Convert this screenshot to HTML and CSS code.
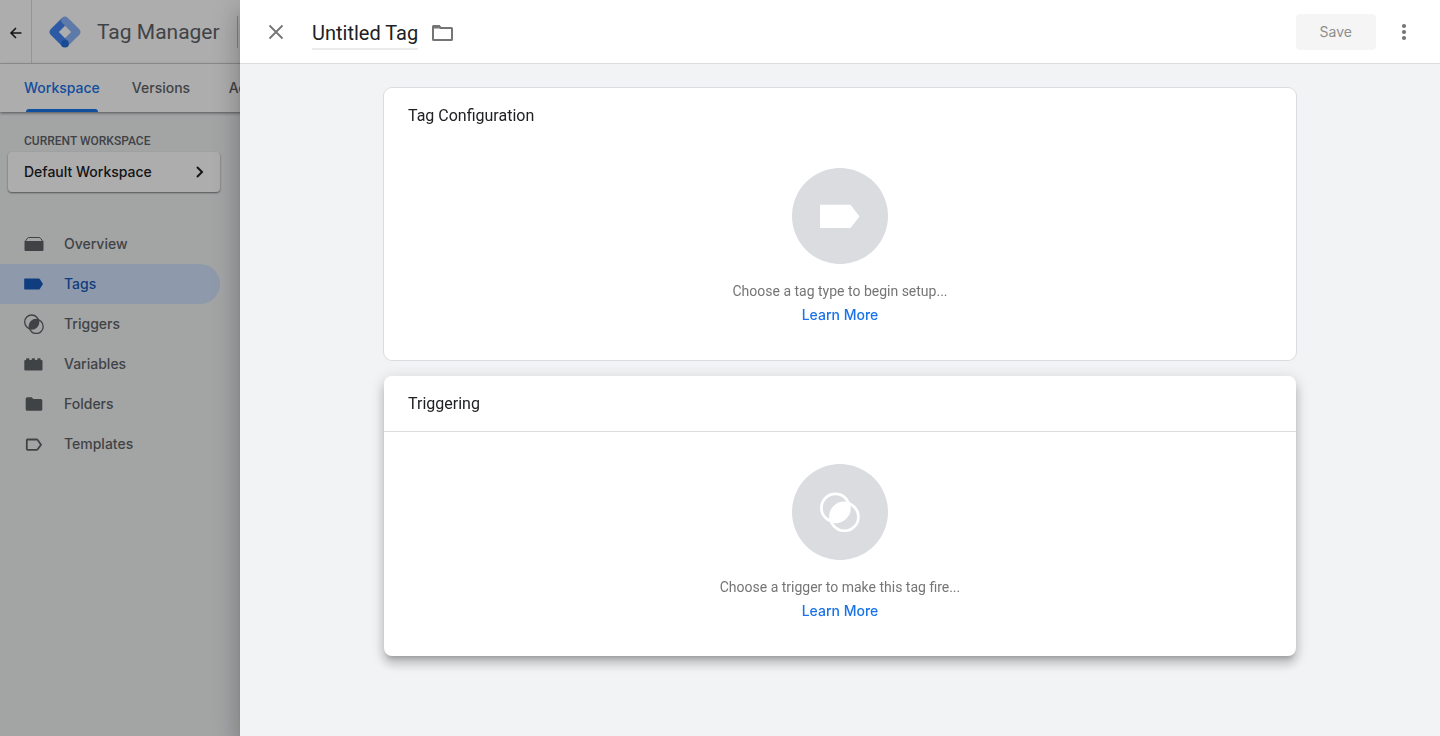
FILE: index.html
```html
<!DOCTYPE html>
<html lang="en">
<head>
	<meta charset="UTF-8">
	<title>Tag Manager</title>
	<meta name="viewport" content="width=device-width, initial-scale=1.0">
	<link rel="stylesheet" href="styles.css">
</head>
<body>
	<svg class="sprite" aria-hidden="true">
		<symbol id="i-trigger" viewBox="0 0 40 40">
			<g fill="none" stroke="currentColor" stroke-width="2.7">
				<circle cx="15.4" cy="15.9" r="14"/>
				<circle cx="24.4" cy="24.9" r="14"/>
			</g>
			<path fill="currentColor" d="M28.7 11.6A14 14 0 0 1 11.1 29.2A14 14 0 0 1 28.7 11.6Z"/>
		</symbol>
	</svg>

	<div class="app">
		<header class="topbar">
			<button class="back" type="button" aria-label="Back">
				<svg width="16" height="16" viewBox="0 0 16 16"><path d="M13.5 9H3M8 4L3 9l5 5" fill="none" stroke="currentColor" stroke-width="1.6"/></svg>
			</button>
			<a class="brand" href="#">
				<svg width="32" height="32" viewBox="-40 -40 2550 2550">
					<path fill="#8ab4f8" d="M1449.8 2376L1021 1946.7l921.1-930.5 436.7 436.6z"/>
					<path fill="#4285f4" d="M1452.9 527.1L1016.3 90.4 90.5 1016.2c-120.6 120.5-120.7 315.8-.2 436.4l.2.2 925.8 925.8 428.3-430.3L745 1235.1z"/>
					<path fill="#8ab4f8" d="M2378.7 1016.2L1452.9 90.4c-120.6-120.6-316.1-120.6-436.7 0-120.6 120.6-120.6 316.1 0 436.6l926.3 925.8c120.6 120.6 316.1 120.6 436.6 0 120.6-120.6 120.6-316.1 0-436.6z"/>
					<circle fill="#246fdb" cx="1231" cy="2164" r="306"/>
				</svg>
				<span>Tag Manager</span>
			</a>
			<span class="divider"></span>
		</header>
		<nav class="tabs">
			<a class="tab active" href="#">Workspace</a>
			<a class="tab" href="#">Versions</a>
			<a class="tab" href="#">Admin</a>
		</nav>
		<aside class="sidebar">
			<p class="label">CURRENT WORKSPACE</p>
			<button class="workspace" type="button">
				<span>Default Workspace</span>
				<svg width="16" height="16" viewBox="0 0 16 16"><path d="M5 3l5 5-5 5" fill="none" stroke="currentColor" stroke-width="2"/></svg>
			</button>
			<nav class="menu">
				<a class="item" href="#">
					<svg width="20" height="20" viewBox="0 0 20 20"><path fill="currentColor" d="M1 7h18q.5 0 .5.5V16q0 1-1 1h-17q-1 0-1-1V7.5Q.5 7 1 7z"/><path fill="none" stroke="currentColor" d="M1.500 7l2-2.800q.5-.7 1.500-.7h10q1 0 1.500.7l2 2.800"/></svg>
					<span>Overview</span>
				</a>
				<a class="item active" href="#">
					<svg width="20" height="20" viewBox="0 0 20 20"><path fill="currentColor" d="M1 4.500h13.500q.8 0 1.300.600l3.200 4.900-3.200 4.900q-.5.600-1.300.600H1q-.8 0-.8-.8V5.300q0-.8.8-.8z"/></svg>
					<span>Tags</span>
				</a>
				<a class="item" href="#">
					<svg width="20" height="20"><use href="#i-trigger"/></svg>
					<span>Triggers</span>
				</a>
				<a class="item" href="#">
					<svg width="20" height="20" viewBox="0 0 20 20"><path fill="currentColor" d="M.3 16V7q0-1 1-1h.8V5q0-.8.8-.8h1.700q.8 0 .8.8v1h2.300V5q0-.8.8-.8h1.700q.8 0 .8.8v1h2.300V5q0-.8.8-.8h1.700q.8 0 .8.8v1h.9q1 0 1 1v8.5q0 1-1 1H1.300q-1 0-1-1z"/></svg>
					<span>Variables</span>
				</a>
				<a class="item" href="#">
					<svg width="20" height="20" viewBox="0 0 20 20"><path fill="currentColor" d="M1.700 4.700q0-1.500 1.500-1.500h4.500l1.700 1.700h7.400q1.500 0 1.500 1.500v8.900q0 1.500-1.500 1.500H3.200q-1.500 0-1.500-1.500z"/></svg>
					<span>Folders</span>
				</a>
				<a class="item" href="#">
					<svg width="20" height="20" viewBox="0 0 20 20"><path fill="none" stroke="currentColor" stroke-width="1.8" d="M3.600 5.500h8.900q.8 0 1.200.6l3.300 4.600-3.300 4.600q-.4.600-1.200.6H3.600q-.8 0-.8-.8V6.300q0-.8.8-.8z"/></svg>
					<span>Templates</span>
				</a>
			</nav>
		</aside>
	</div>

	<div class="scrim"></div>

	<main class="sheet">
		<header class="sheet-header">
			<button class="icon-btn close" type="button" aria-label="Close">
				<svg width="24" height="24" viewBox="0 0 24 24"><path d="M5.500 5.500l13 13M18.500 5.500l-13 13" fill="none" stroke="currentColor" stroke-width="1.8"/></svg>
			</button>
			<input class="tag-name" type="text" value="Untitled Tag" size="9" aria-label="Tag name">
			<button class="icon-btn" type="button" aria-label="Choose folder">
				<svg width="24" height="24" viewBox="0 0 24 24"><path fill="none" stroke="currentColor" stroke-width="2" d="M3 6.500q0-.6.6-.6h5.200l2 2h10.600q.6 0 .6.6v11q0 .6-.6.6H3.600q-.6 0-.6-.6z"/><path fill="currentColor" d="M3 5h6.500l2.500 3.500H3z"/></svg>
			</button>
			<div class="actions">
				<button class="save" type="button" disabled>Save</button>
				<button class="icon-btn" type="button" aria-label="More actions">
					<svg width="24" height="24" viewBox="0 0 24 24" fill="currentColor"><circle cx="12" cy="6" r="2.100"/><circle cx="12" cy="12" r="2.100"/><circle cx="12" cy="18" r="2.100"/></svg>
				</button>
			</div>
		</header>
		<div class="sheet-body">
			<section class="card">
				<h2>Tag Configuration</h2>
				<div class="empty">
					<span class="disc">
						<svg width="40" height="40" viewBox="0 0 40 40"><path fill="currentColor" d="M0 8.700h30.500L39.500 20.500l-9 11.500H0z"/></svg>
					</span>
					<p>Choose a tag type to begin setup...</p>
					<a href="#">Learn More</a>
				</div>
			</section>
			<section class="card raised">
				<h2>Triggering</h2>
				<div class="empty">
					<span class="disc">
						<svg width="40" height="40"><use href="#i-trigger"/></svg>
					</span>
					<p>Choose a trigger to make this tag fire...</p>
					<a href="#">Learn More</a>
				</div>
			</section>
		</div>
	</main>
</body>
</html>
```
FILE: styles.css
```css
*{box-sizing: border-box;}
html,body{
	height: 100%;
	margin: 0;
}
body{
	background: #f1f3f4;
	font: 14px/24px Roboto, "Liberation Sans", sans-serif;
	color: #202124;
	overflow: hidden;
}
h2,p{margin: 0;}
a{text-decoration: none;color: inherit;}
svg{display: block;flex: none;}
button{
	border: 0;
	padding: 0;
	background: none;
	font: inherit;
	color: inherit;
}
.sprite{position: absolute;width: 0;height: 0;}

/* app behind the sheet */
.topbar{
	display: flex;
	align-items: center;
	height: 64px;
	background: #fff;
	border-bottom: 1px solid #dadce0;
}
.back{
	display: flex;
	align-items: center;
	justify-content: center;
	width: 32px;
	height: 100%;
	border-right: 1px solid #dadce0;
}
.brand{
	display: flex;
	align-items: center;
	gap: 16px;
	margin: 0 17px;
	font-size: 21px;
	line-height: 32px;
	color: #5f6368;
}
.divider{
	width: 1px;
	height: 32px;
	background: #bdc1c6;
}
.tabs{
	position: relative;
	display: flex;
	height: 48px;
	padding-left: 8px;
	background: #fff;
	box-shadow: 0 1px 3px rgba(0,0,0,.5);
}
.tab{
	position: relative;
	min-width: 88px;
	padding: 0 16px;
	font: 500 14px/48px Inter, sans-serif;
	text-align: center;
	color: #5f6368;
}
.tab.active{color: #1a73e8;}
.tab.active:after{
	content: "";
	position: absolute;
	left: 18px;
	right: 18px;
	bottom: 0;
	height: 3px;
	border-radius: 3px 3px 0 0;
	background: #1a73e8;
}
.sidebar{
	width: 220px;
	padding-top: 16px;
}
.label{
	height: 24px;
	padding-left: 24px;
	font-size: 12px;
	font-weight: 500;
	line-height: 26px;
	color: #5f6368;
}
.workspace{
	display: flex;
	align-items: center;
	justify-content: space-between;
	width: 212px;
	height: 40px;
	margin-left: 8px;
	padding: 0 12px 0 16px;
	border-radius: 4px;
	background: #fff;
	box-shadow: 0 1px 2px rgba(0,0,0,.5);
	font: 500 14px/24px Inter, sans-serif;
}
.menu{margin-top: 32px;}
.item{
	display: flex;
	align-items: center;
	gap: 20px;
	height: 40px;
	padding-left: 24px;
	border-radius: 0 20px 20px 0;
	font: 500 14px/24px Inter, sans-serif;
	color: #5f6368;
}
.item.active{
	background: #d2e3fc;
	color: #185abc;
}

.scrim{
	position: fixed;
	inset: 0;
	background: rgba(0,0,0,.32);
}

/* sheet */
.sheet{
	position: fixed;
	inset: 0 0 0 240px;
	overflow: auto;
	background: #f1f3f4;
	box-shadow: 0 8px 10px -5px rgba(0,0,0,.2), 0 16px 24px 2px rgba(0,0,0,.14), 0 6px 30px 5px rgba(0,0,0,.12);
}
.sheet-header{
	display: flex;
	align-items: center;
	height: 64px;
	padding: 0 24px;
	background: #fff;
	border-bottom: 1px solid #dadce0;
}
.icon-btn{color: #757575;}
.close{margin-right: 24px;}
.tag-name{
	field-sizing: content;
	height: 36px;
	margin-right: 12px;
	padding: 4px 0 0;
	border: 0;
	border-bottom: 2px solid #ebebeb;
	background: none;
	font: 20px/30px Roboto, sans-serif;
	color: #202124;
}
.actions{
	display: flex;
	align-items: center;
	gap: 16px;
	margin-left: auto;
}
.save{
	height: 36px;
	padding: 0 24px;
	border-radius: 4px;
	background: #f5f5f5;
	font-family: Inter, sans-serif;
	color: #8f8f8f;
}
.sheet-body{
	display: grid;
	gap: 16px;
	max-width: 960px;
	margin: 0 auto;
	padding: 24px;
}
.card{
	border-radius: 8px;
	background: #fff;
	box-shadow: 0 0 0 1px #dadce0;
}
.card h2{
	height: 56px;
	padding: 0 24px;
	font-size: 16px;
	font-weight: 400;
	line-height: 56px;
}
.empty{
	display: flex;
	flex-direction: column;
	align-items: center;
	padding: 24px 24px 33px;
	color: #757575;
}
.empty a{
	font: 500 14px/24px Inter, sans-serif;
	color: #1a73e8;
}
.disc{
	display: flex;
	align-items: center;
	justify-content: center;
	width: 96px;
	height: 96px;
	margin-bottom: 15px;
	border-radius: 50%;
	background: #dadce0;
	color: #fff;
}
.card.raised{
	box-shadow: 0 5px 5px -3px rgba(0,0,0,.2), 0 8px 10px 1px rgba(0,0,0,.14), 0 3px 14px 2px rgba(0,0,0,.12);
}
.raised h2{border-bottom: 1px solid #dadce0;}
.raised .empty{padding-top: 32px;}
```
